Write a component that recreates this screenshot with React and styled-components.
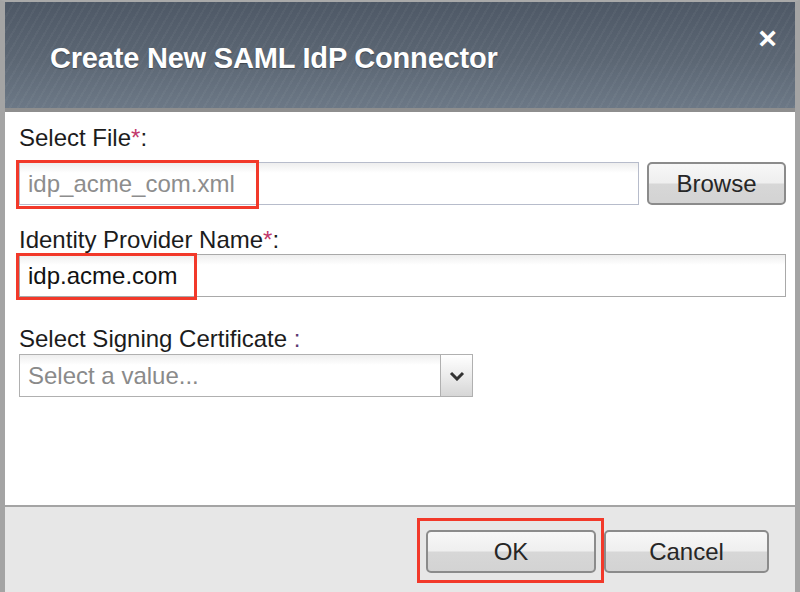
import React from 'react';
import styled, { createGlobalStyle } from 'styled-components';

const GlobalStyle = createGlobalStyle`
  *, *::before, *::after {
    box-sizing: border-box;
  }
  html, body {
    margin: 0;
    padding: 0;
    background: #ffffff;
    font-family: 'Liberation Sans', Arial, sans-serif;
  }
`;

const Dialog = styled.div`
  width: 800px;
  height: 592px;
  display: flex;
  flex-direction: column;
  border-left: 5px solid #a4a4a4;
  border-right: 5px solid #a4a4a4;
  border-top: 2px solid #a9a9a9;
  overflow: hidden;
`;

const Header = styled.div`
  height: 110px;
  flex-shrink: 0;
  display: flex;
  align-items: center;
  justify-content: space-between;
  padding: 0 18px 0 45px;
  border-bottom: 4px solid #8e8e8e;
  background:
    repeating-linear-gradient(
      120deg,
      rgba(255, 255, 255, 0.035) 0 2px,
      transparent 2px 7px
    ),
    linear-gradient(180deg, #4e5866 0%, #5c6774 55%, #6c7886 100%);
`;

const Title = styled.h1`
  margin: 0;
  margin-top: 6px;
  color: #ffffff;
  font-size: 29px;
  font-weight: bold;
  letter-spacing: -0.2px;
  text-shadow: 0 1px 1px rgba(0, 0, 0, 0.35);
`;

const Close = styled.span`
  align-self: flex-start;
  margin-top: 20px;
  color: #ffffff;
  font-size: 32px;
  font-weight: bold;
  line-height: 1;
`;

const Body = styled.div`
  flex: 1;
  padding: 12px 9px 0 14px;
  border-bottom: 2px solid #a4a4a4;
  background: #ffffff;
`;

const Field = styled.div`
  margin-top: ${(p) => p.$top || 0}px;
`;

const Label = styled.div`
  font-size: 24px;
  line-height: 28px;
  color: #1c1c1c;
  white-space: pre;
`;

const Req = styled.span`
  color: ${(p) => p.$tone || '#c2396b'};
`;

const Row = styled.div`
  display: flex;
  gap: 8px;
  margin-top: ${(p) => p.$gap}px;
`;

const InputWrap = styled.div`
  position: relative;
  width: ${(p) => p.$w}px;
`;

const TextBox = styled.div`
  height: 43px;
  width: 100%;
  display: flex;
  align-items: center;
  padding-left: 8px;
  font-size: 24px;
  color: ${(p) => (p.$muted ? '#8d8d8d' : '#111111')};
  border: 1px solid ${(p) => (p.$blue ? '#b7bccb' : '#a9a9a9')};
  background: linear-gradient(180deg, #eeeeee 0px, #ffffff 10px);
`;

const Highlight = styled.div`
  position: absolute;
  left: ${(p) => p.$x}px;
  top: ${(p) => p.$y}px;
  width: ${(p) => p.$w}px;
  height: ${(p) => p.$h}px;
  border: 3px solid #f2392a;
  pointer-events: none;
`;

const Button = styled.div`
  width: ${(p) => p.$w}px;
  height: 43px;
  display: flex;
  align-items: center;
  justify-content: center;
  font-size: 24px;
  color: #262626;
  border: 2px solid #8b8b8b;
  border-radius: 5px;
  background: linear-gradient(180deg, #f7f7f7 0%, #efefef 48%, #d7d7d7 52%, #d3d3d3 100%);
`;

const Select = styled.div`
  width: 454px;
  height: 43px;
  display: flex;
  border: 1px solid #b0b0b0;
  background: linear-gradient(180deg, #eeeeee 0px, #ffffff 10px);
`;

const SelectText = styled.div`
  flex: 1;
  display: flex;
  align-items: center;
  padding-left: 8px;
  font-size: 24px;
  color: #8a8a8a;
`;

const SelectArrow = styled.div`
  width: 32px;
  display: flex;
  align-items: center;
  justify-content: center;
  border-left: 1px solid #b0b0b0;
  background: linear-gradient(180deg, #ffffff 0%, #ececec 50%, #d6d6d6 100%);
`;

const Footer = styled.div`
  height: 85px;
  flex-shrink: 0;
  display: flex;
  justify-content: flex-end;
  align-items: flex-start;
  gap: 8px;
  padding: 23px 26px 0 0;
  background: #e7e7e7;
`;

const ButtonWrap = styled.div`
  position: relative;
`;

export default function App() {
  return (
    <>
      <GlobalStyle />
      <Dialog>
        <Header>
          <Title>Create New SAML IdP Connector</Title>
          <Close>×</Close>
        </Header>
        <Body>
          <Field>
            <Label>
              Select File<Req>*</Req>:
            </Label>
            <Row $gap={10}>
              <InputWrap $w={620}>
                <TextBox $muted $blue>idp_acme_com.xml</TextBox>
                <Highlight $x={-3} $y={-2} $w={243} $h={49} />
              </InputWrap>
              <Button $w={139}>Browse</Button>
            </Row>
          </Field>
          <Field $top={21}>
            <Label>
              Identity Provider Name<Req>*</Req>:
            </Label>
            <Row $gap={0}>
              <InputWrap $w={767}>
                <TextBox>idp.acme.com</TextBox>
                <Highlight $x={-3} $y={-1} $w={181} $h={47} />
              </InputWrap>
            </Row>
          </Field>
          <Field $top={28}>
            <Label>
              Select Signing Certificate <Req $tone="#5e3a72">:</Req>
            </Label>
            <Row $gap={1}>
              <Select>
                <SelectText>Select a value...</SelectText>
                <SelectArrow>
                  <svg width="16" height="10" viewBox="0 0 16 10">
                    <path d="M2 2 L8 8 L14 2" fill="none" stroke="#333" strokeWidth="3" />
                  </svg>
                </SelectArrow>
              </Select>
            </Row>
          </Field>
        </Body>
        <Footer>
          <ButtonWrap>
            <Button $w={170}>OK</Button>
            <Highlight $x={-9} $y={-12} $w={187} $h={65} />
          </ButtonWrap>
          <Button $w={165}>Cancel</Button>
        </Footer>
      </Dialog>
    </>
  );
}
